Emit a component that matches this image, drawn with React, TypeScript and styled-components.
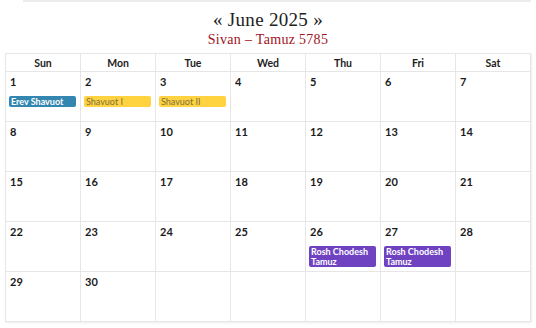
import styled, { createGlobalStyle } from 'styled-components';

const GlobalStyle = createGlobalStyle`
  html, body {
    margin: 0;
    padding: 0;
    background: #ffffff;
  }
  body {
    width: 536px;
    height: 328px;
    overflow: hidden;
  }
`;

type EventKind = 'blue' | 'yellow' | 'purple';

type CalEvent = { title: string; kind: EventKind };

type Day = { day?: number; events?: CalEvent[] };

const eventColors: Record<EventKind, { bg: string; fg: string; weight: number }> = {
  blue: { bg: '#3286b0', fg: '#ffffff', weight: 700 },
  yellow: { bg: '#ffd23f', fg: '#80703f', weight: 400 },
  purple: { bg: '#6f42c1', fg: '#ffffff', weight: 700 },
};

const Page = styled.div`
  padding: 0 5px 0 5px;
  width: 526px;
`;

const TopRule = styled.div`
  height: 0;
  border-top: 2px solid #ececec;
  margin-left: 18px;
`;

const Heading = styled.div`
  display: flex;
  flex-direction: column;
  align-items: center;
  padding-top: 6px;
  height: 45px;
  box-sizing: border-box;
`;

const Title = styled.div`
  font-family: 'Liberation Serif', 'DejaVu Serif', serif;
  font-size: 19px;
  line-height: 23px;
  color: #222;
  letter-spacing: 0.3px;
`;

const Subtitle = styled.div`
  font-family: 'Liberation Serif', 'DejaVu Serif', serif;
  font-size: 14px;
  line-height: 18px;
  color: #a0121b;
  letter-spacing: 0.3px;
`;

const Grid = styled.div`
  margin-top: 6px;
  display: grid;
  grid-template-columns: repeat(7, 75px);
  border-top: 1px solid #e6e6e6;
  border-left: 1px solid #e6e6e6;
  width: 525px;
  box-shadow: 1px 1px 2px rgba(0, 0, 0, 0.08);
  font-family: 'Lato', 'Open Sans', sans-serif;
`;

const HeadCell = styled.div`
  height: 17px;
  border-right: 1px solid #e6e6e6;
  border-bottom: 1px solid #e6e6e6;
  display: flex;
  align-items: center;
  justify-content: center;
  font-size: 10.5px;
  font-weight: 700;
  color: #222;
`;

const DayCell = styled.div`
  border-right: 1px solid #e6e6e6;
  border-bottom: 1px solid #e6e6e6;
  display: flex;
  flex-direction: column;
  padding: 3px 3px 0 3px;
  box-sizing: border-box;
  height: 50px;
`;

const DayNum = styled.div`
  font-size: 11px;
  font-weight: 700;
  line-height: 14px;
  color: #1a1a1a;
  padding-left: 1px;
  margin-bottom: 7px;
`;

const Event = styled.div<{ $kind: EventKind }>`
  background: ${({ $kind }) => eventColors[$kind].bg};
  color: ${({ $kind }) => eventColors[$kind].fg};
  font-weight: ${({ $kind }) => eventColors[$kind].weight};
  font-size: 9px;
  line-height: 10px;
  padding: 1px 2px 0 2px;
  border-radius: 2px;
  margin-right: 1px;
`;

const weekdays = ['Sun', 'Mon', 'Tue', 'Wed', 'Thu', 'Fri', 'Sat'];

const events: Record<number, CalEvent[]> = {
  1: [{ title: 'Erev Shavuot', kind: 'blue' }],
  2: [{ title: 'Shavuot I', kind: 'yellow' }],
  3: [{ title: 'Shavuot II', kind: 'yellow' }],
  26: [{ title: 'Rosh Chodesh Tamuz', kind: 'purple' }],
  27: [{ title: 'Rosh Chodesh Tamuz', kind: 'purple' }],
};

const days: Day[] = [];
for (let d = 1; d <= 30; d++) days.push({ day: d, events: events[d] });
while (days.length < 35) days.push({});

export default function App() {
  return (
    <>
      <GlobalStyle />
      <Page>
        <TopRule />
        <Heading>
          <Title>« June 2025 »</Title>
          <Subtitle>Sivan – Tamuz 5785</Subtitle>
        </Heading>
        <Grid>
          {weekdays.map((w) => (
            <HeadCell key={w}>{w}</HeadCell>
          ))}
          {days.map((d, i) => (
            <DayCell key={i}>
              {d.day && <DayNum>{d.day}</DayNum>}
              {d.events?.map((e) => (
                <Event key={e.title} $kind={e.kind}>
                  {e.title}
                </Event>
              ))}
            </DayCell>
          ))}
        </Grid>
      </Page>
    </>
  );
}
